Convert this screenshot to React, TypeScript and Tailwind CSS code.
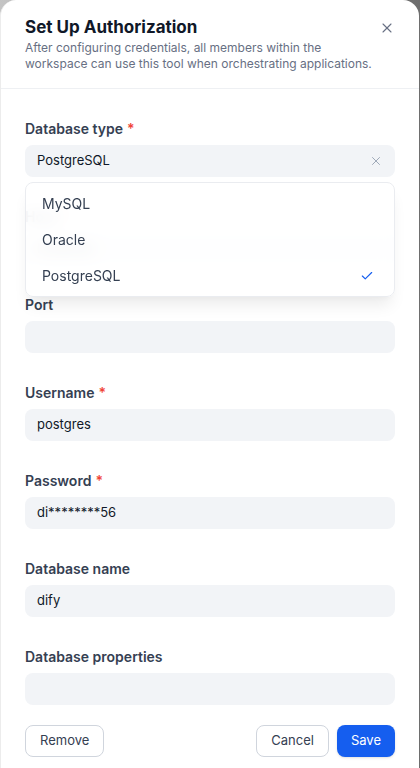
import { X, Check } from 'lucide-react';

const FONT = "font-['Inter','Noto_Sans',sans-serif]";

type Field = { label: string; required?: boolean; value?: string; clearable?: boolean };

const FIELDS: Field[] = [
  { label: 'Database type', required: true, value: 'PostgreSQL', clearable: true },
  { label: 'Host', required: true, value: 'localhost' },
  { label: 'Port' },
  { label: 'Username', required: true, value: 'postgres' },
  { label: 'Password', required: true, value: 'di********56' },
  { label: 'Database name', value: 'dify' },
  { label: 'Database properties' },
];

const OPTIONS = ['MySQL', 'Oracle', 'PostgreSQL'];

function FormField({ field, children }: { field: Field; children?: React.ReactNode }) {
  return (
    <div className="relative">
      <div className="h-6 leading-6 mb-1 text-sm font-semibold text-[#354052] flex items-center">
        {field.label}
        {field.required && <span className="ml-1 text-[#f04438]">*</span>}
      </div>
      <div className="h-8 rounded-lg bg-[#f2f4f7] px-3 flex items-center text-[13px] text-[#101828]">
        <span className="flex-1">{field.value}</span>
        {field.clearable && <X size={14} strokeWidth={1.6} className="text-[#98a2b3]" />}
      </div>
      {children}
    </div>
  );
}

export default function App() {
  const selected = 'PostgreSQL';

  return (
    <div className={`w-[420px] h-[768px] bg-gradient-to-r from-[#c4c4c4] to-[#6e6e6e] overflow-hidden ${FONT}`}>
      <div className="w-[419px] h-full bg-white rounded-t-2xl border-l border-[#ececec] relative">
        {/* header */}
        <div className="pl-6 pt-[14px] pb-4 border-b border-[#eef0f3]">
          <h2 className="text-[17px] leading-[26px] font-bold text-[#101828]">Set Up Authorization</h2>
          <p className="w-[360px] text-xs leading-4 text-[#676f83]">
            After configuring credentials, all members within the workspace can use this tool when orchestrating applications.
          </p>
          <button className="absolute top-[20px] right-6 text-[#676f83]">
            <X size={16} strokeWidth={1.6} />
          </button>
        </div>

        {/* form */}
        <div className="px-6 pt-7 flex flex-col gap-7">
          {FIELDS.map((f, i) => (
            <FormField key={f.label} field={f}>
              {i === 0 && (
                <div className="absolute left-0 right-0 top-[65px] z-10 px-1 pt-[3px] pb-0.5 rounded-lg border border-[#eaecf0] bg-white/90 backdrop-blur-sm shadow-[0_12px_16px_-4px_rgba(9,9,11,0.08),0_4px_6px_-2px_rgba(9,9,11,0.03)]">
                  {OPTIONS.map((o) => (
                    <div key={o} className="h-9 px-3 flex items-center text-sm text-[#354052]">
                      <span className="flex-1">{o}</span>
                      {o === selected && <Check size={14} strokeWidth={2} className="text-[#155eef] mr-1" />}
                    </div>
                  ))}
                </div>
              )}
            </FormField>
          ))}
        </div>

        {/* footer */}
        <div className="px-6 mt-5 flex items-center">
          <button className="h-8 px-[14px] rounded-lg border border-[#d0d5dd] bg-white text-[13px] text-[#354052]">Remove</button>
          <div className="flex-1" />
          <button className="h-8 px-[14px] rounded-lg border border-[#d0d5dd] bg-white text-[13px] text-[#354052]">Cancel</button>
          <button className="ml-2 h-8 px-[14px] rounded-lg bg-[#155eef] text-[13px] text-white shadow-sm">Save</button>
        </div>
      </div>
    </div>
  );
}
